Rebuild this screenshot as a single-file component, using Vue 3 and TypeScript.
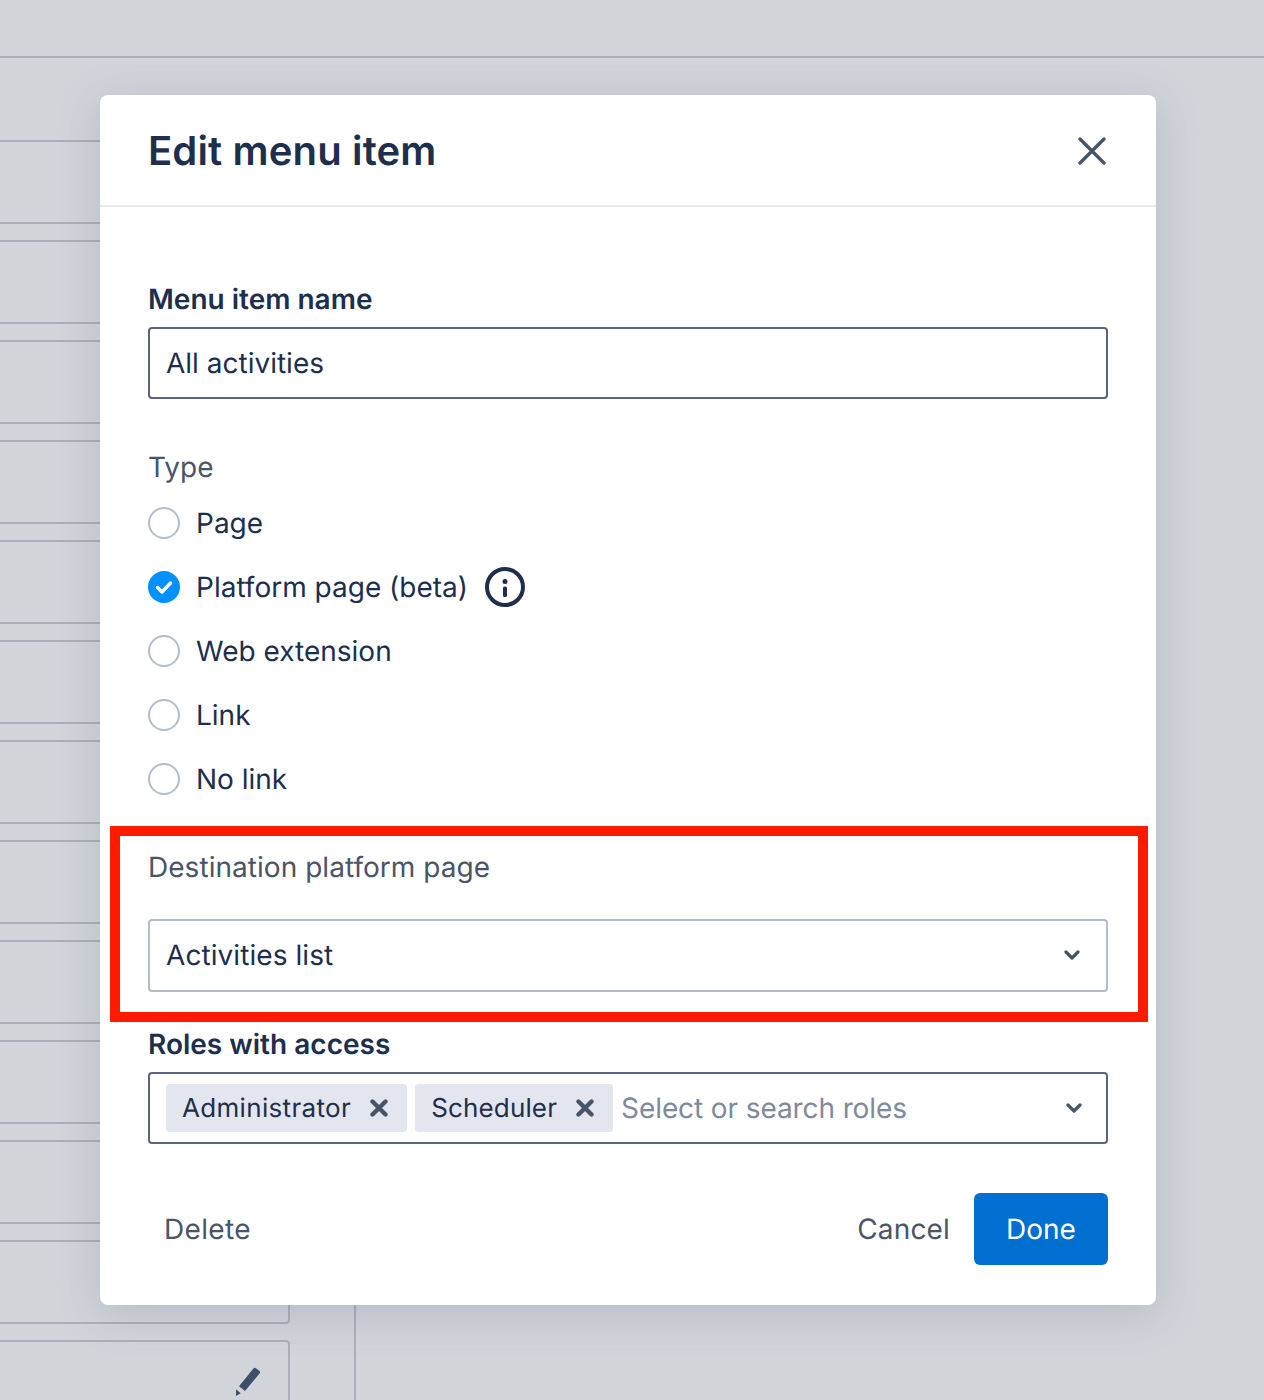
<script setup lang="ts">
const cards: number[] = Array.from({ length: 12 }, (_, i) => i);
const types = [
  { label: 'Page', on: false, info: false },
  { label: 'Platform page (beta)', on: true, info: true },
  { label: 'Web extension', on: false, info: false },
  { label: 'Link', on: false, info: false },
  { label: 'No link', on: false, info: false },
];
const roles = ['Administrator', 'Scheduler'];
</script>

<template>
  <div class="page">
    <div class="topbar"></div>
    <div class="content">
      <div class="side">
        <div v-for="c in cards" :key="c" class="card"></div>
        <div class="card last">
          <svg class="pencil" width="28" height="30" viewBox="0 0 28 30">
            <path d="M19.2 2.7a2 2 0 0 1 2.8-.4l3.2 2.5a2 2 0 0 1 .3 2.8L11 25 5 20.2z" fill="#3f4f69" />
            <path d="M2 23.3l4.7 4L2 30z" fill="#3f4f69" />
          </svg>
        </div>
      </div>
    </div>

    <div class="modal">
      <header class="modal-head">
        <h1 class="title">Edit menu item</h1>
        <svg class="close" width="28" height="28" viewBox="0 0 28 28">
          <path d="M2 2l24 24M26 2L2 26" stroke="#475569" stroke-width="3.4" stroke-linecap="round" fill="none" />
        </svg>
      </header>

      <div class="modal-body">
        <label class="label strong">Menu item name</label>
        <div class="field dark">All activities</div>

        <div class="label muted gap48">Type</div>
        <div class="radios">
          <div v-for="t in types" :key="t.label" class="radio-row">
            <span v-if="!t.on" class="radio"></span>
            <svg v-else class="radio-on" width="32" height="32" viewBox="0 0 32 32">
              <circle cx="16" cy="16" r="16" fill="#0091ff" />
              <path d="M9.5 16.5l4.5 4.5 8.5-9" stroke="#fff" stroke-width="3.4" stroke-linecap="round" stroke-linejoin="round" fill="none" />
            </svg>
            <span class="radio-text">{{ t.label }}</span>
            <svg v-if="t.info" class="info" width="40" height="40" viewBox="0 0 40 40">
              <circle cx="20" cy="20" r="18" stroke="#1e2f4d" stroke-width="4" fill="none" />
              <circle cx="20" cy="14.6" r="2.5" fill="#1e2f4d" />
              <rect x="18" y="19.5" width="4" height="10.5" rx="1.6" fill="#1e2f4d" />
            </svg>
          </div>
        </div>

        <div class="label muted gap48 dest">Destination platform page</div>
        <div class="field light select">
          <span>Activities list</span>
          <svg class="chev" width="16" height="10" viewBox="0 0 16 10">
            <path d="M2 2l6 6 6-6" stroke="#475569" stroke-width="3.2" stroke-linecap="round" stroke-linejoin="round" fill="none" />
          </svg>
        </div>

        <label class="label strong roles-label">Roles with access</label>
        <div class="field dark multi">
          <span v-for="r in roles" :key="r" class="chip" :class="r.toLowerCase()">
            <span>{{ r }}</span>
            <svg width="18" height="18" viewBox="0 0 18 18">
              <path d="M2.5 2.5l13 13M15.5 2.5l-13 13" stroke="#475569" stroke-width="4.4" stroke-linecap="round" fill="none" />
            </svg>
          </span>
          <span class="placeholder">Select or search roles</span>
          <svg class="chev multi-chev" width="16" height="10" viewBox="0 0 16 10">
            <path d="M2 2l6 6 6-6" stroke="#475569" stroke-width="3.2" stroke-linecap="round" stroke-linejoin="round" fill="none" />
          </svg>
        </div>

        <footer class="foot">
          <button class="btn ghost delete" type="button">Delete</button>
          <div class="foot-right">
            <button class="btn ghost cancel" type="button">Cancel</button>
            <button class="btn primary" type="button">Done</button>
          </div>
        </footer>
      </div>
    </div>

    <div class="highlight"></div>
  </div>
</template>

<style>
html, body { margin: 0; background: #d1d5da; }
</style>

<style scoped>
.page {
  position: relative;
  width: 1264px;
  height: 1400px;
  overflow: hidden;
  background: #d1d5da;
  font-family: Inter, "Liberation Sans", sans-serif;
  text-rendering: geometricPrecision;
  box-sizing: border-box;
}
.topbar { height: 58px; box-sizing: border-box; border-bottom: 2px solid #a9afba; }
.content { display: flex; height: 1342px; }
.side {
  width: 356px;
  box-sizing: border-box;
  border-right: 2px solid #a9afba;
  margin-top: 82px;
  padding-right: 64px;
  display: flex;
  flex-direction: column;
  gap: 16px;
}
.card {
  flex: none;
  height: 84px;
  box-sizing: border-box;
  margin-left: -20px;
  border: 2px solid #a9afba;
  border-radius: 4px;
}
.card.last { position: relative; }
.pencil { position: absolute; left: 252px; top: 24px; }

.modal {
  position: absolute;
  left: 100px;
  top: 95px;
  width: 1056px;
  height: 1210px;
  background: #fff;
  border-radius: 8px;
  box-shadow: 0 8px 40px rgba(100, 110, 130, 0.25);
  display: flex;
  flex-direction: column;
}
.modal-head {
  height: 112px;
  box-sizing: border-box;
  border-bottom: 2px solid #e5e8ed;
  padding: 2px 50px 0 48px;
  display: flex;
  align-items: center;
  justify-content: space-between;
}
.title { margin: 0; font-size: 40px; line-height: 56px; font-weight: 600; color: #1e2f4d; letter-spacing: 0.15px; }
.modal-body { padding: 72px 48px 40px; display: flex; flex-direction: column; }

.label { font-size: 28px; line-height: 40px; display: block; }
.strong { font-weight: 600; color: #1e2f4d; }
.muted { color: #4a5568; }
.gap48 { margin-top: 48px; }
.dest { letter-spacing: 0.04px; }

.field {
  box-sizing: border-box;
  border-radius: 4px;
  font-size: 28px;
  color: #1e2f4d;
  display: flex;
  align-items: center;
  padding: 0 16px;
  height: 72px;
  margin-top: 8px;
}
.dark { border: 2px solid #5a6579; }
.light { border: 2px solid #b2bccb; }
.select { height: 73px; margin-top: 32px; justify-content: space-between; padding: 0 26px 1px 16px; letter-spacing: 0.07px; }

.radios { display: flex; flex-direction: column; gap: 24px; margin-top: 16px; }
.radio-row { display: flex; align-items: center; height: 40px; font-size: 28px; color: #1e2f4d; }
.radio { width: 32px; height: 32px; box-sizing: border-box; border: 2px solid #b2bccb; border-radius: 50%; flex: none; }
.radio-on { flex: none; }
.radio-text { margin-left: 16px; }
.info { margin-left: 17px; flex: none; }

.roles-label { margin-top: 32px; }
.multi { padding: 0 24px 0 16px; gap: 8px; }
.chip {
  height: 48px;
  box-sizing: border-box;
  display: inline-flex;
  align-items: center;
  gap: 19px;
  padding: 0 19px 0 16px;
  background: #e3e6ee;
  border-radius: 4px;
  color: #1e2f4d;
  font-size: 26px;
}
.administrator { letter-spacing: 0.33px; }
.scheduler { letter-spacing: 0.15px; }
.placeholder { color: #7f8a9c; letter-spacing: -0.1px; }
.multi-chev { margin-left: auto; }

.foot { display: flex; align-items: center; justify-content: space-between; margin-top: 49px; }
.foot-right { display: flex; align-items: center; gap: 24px; }
.btn {
  font-family: inherit;
  font-size: 28px;
  line-height: 40px;
  border: none;
  background: none;
  padding: 0;
  height: 72px;
  color: #4a5568;
  text-rendering: geometricPrecision;
}
.delete { padding-left: 16px; letter-spacing: 0.33px; }
.cancel { letter-spacing: 0.15px; }
.primary { width: 134px; background: #006fcf; color: #fff; border-radius: 6px; }

.highlight {
  position: absolute;
  left: 110px;
  top: 826px;
  width: 1038px;
  height: 196px;
  box-sizing: border-box;
  border: 10px solid #ff1a00;
  pointer-events: none;
}
</style>
